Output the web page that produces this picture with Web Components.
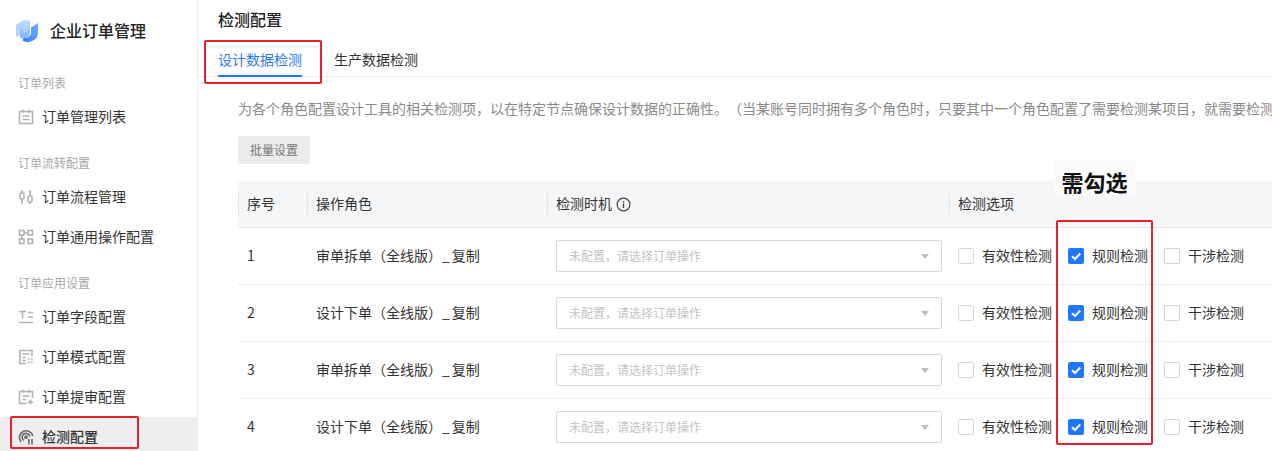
<!DOCTYPE html>
<html lang="zh-CN">
<head>
<meta charset="utf-8">
<title>检测配置</title>
<style>
html, body { margin: 0; height: 451px; overflow: hidden; background: #fff; }
body { font-family: "Noto Sans CJK SC", "Noto Sans", sans-serif; color: #333; font-size: 14px; text-spacing-trim: space-all; }
</style>
</head>
<body>
<order-app></order-app>
<script>
const ICONS = {
    list: '<rect x="1.500" y="2.500" width="13" height="12"/><path d="M5 .5v3.500M11 .5v3.500M4.500 7h7M4.500 10.500h7"/>',
    sliders: '<path d="M4 1v3M4 10v5M12 1v6M12 13v2"/><rect x="2" y="4" width="4" height="6" rx="1"/><rect x="10" y="7" width="4" height="6" rx="1"/>',
    nodes: '<rect x="1.500" y="1.500" width="4.500" height="4.500"/><rect x="10" y="1.500" width="4.500" height="4.500"/><rect x="1.500" y="10" width="4.500" height="4.500"/><rect x="10" y="10" width="4.500" height="4.500"/><path d="M6 3.700h4M3.700 6v4"/>',
    fields: '<path d="M1 2.500h7M4.500 2.500v7M10 3.500h5M10 8h5M1 13.500h14"/>',
    mode: '<path d="M14 7V1.500H2v13h6"/><path d="M4.500 5h7M4.500 8.500h3M4.500 11.500h3"/><path d="M10 9.800h1.600M13 9.800h1.600M10 13.300h1.600M13 13.300h1.600" stroke-width="1.800"/>',
    review: '<path d="M9 14.500H1.500v-12h13V9"/><path d="M5 .5v3.500M11 .5v3.500M4.500 7h7M4.500 10.500h3M12.500 10.500v5M10 13h5"/>',
    detect: '<path d="M3 13A6.800 6.800 0 1 1 14.800 7"/><path d="M5.800 11.500A3.900 3.900 0 1 1 11.800 7.500"/><circle cx="8" cy="8.200" r="1.100"/><path d="M10.800 10v5.500M14 10v5.500"/>'
};

class OrderLogo extends HTMLElement {
    constructor() {
        super();
        this.attachShadow({ mode: 'open' });
        this.shadowRoot.innerHTML = `
        <style>:host{display:block;width:22px;height:23px}svg{display:block}</style>
        <svg width="22" height="23" viewBox="0 0 22 23">
            <defs>
                <linearGradient id="a" x1="0" y1="0" x2="0" y2="1"><stop offset="0" stop-color="#c6ddfe"/><stop offset="1" stop-color="#7db2fc"/></linearGradient>
                <linearGradient id="b" x1="1" y1="0" x2="0" y2="1"><stop offset="0" stop-color="#7ab2fd"/><stop offset="1" stop-color="#2a80fa"/></linearGradient>
            </defs>
            <path d="M0 5 5 2V15L0 17Z" fill="#b4d2fd"/>
            <path d="M4 2C7 0 10 0 14 .5V13C14 16 11 18 7 18H4Z" fill="url(#a)"/>
            <path d="M7 21C10 22.500 13 22.500 16 21 19 20 22 17 22 13V3L15 7.500V13C15 16 12 18 7 18Z" fill="url(#b)"/>
            <path d="M7.500 6 11.500 4.500M7.500 9 11.500 7.500M7.500 12 11.500 10.500" stroke="#e4efff" stroke-width=".8" fill="none"/>
        </svg>`;
    }
}
customElements.define('order-logo', OrderLogo);

class NavGroup extends HTMLElement {
    constructor() {
        super();
        this.attachShadow({ mode: 'open' });
        this.shadowRoot.innerHTML = `
        <style>
        :host{display:block;margin-bottom:14px}
        .label{height:26px;line-height:24px;padding-left:18px;font-size:12px;color:#a8a8a8}
        </style>
        <div class="label"></div>
        <slot></slot>`;
        this.shadowRoot.querySelector('.label').textContent = this.getAttribute('label');
    }
}
customElements.define('nav-group', NavGroup);

class NavItem extends HTMLElement {
    constructor() {
        super();
        this.attachShadow({ mode: 'open' });
        this.shadowRoot.innerHTML = `
        <style>
        :host{display:flex;align-items:center;gap:8px;height:40px;padding-left:18px;font-size:14px;color:#333}
        :host([active]){background:#eee;font-weight:500}
        slot{display:block;margin-top:-2px}
        svg{display:block;width:16px;height:16px;fill:none;stroke:#b0b2b5;stroke-width:1.600}
        :host([active]) svg{stroke:#66686b}
        </style>
        <svg viewBox="0 0 16 16">${ICONS[this.getAttribute('icon')]}</svg>
        <slot></slot>`;
    }
}
customElements.define('nav-item', NavItem);

class OrderSidebar extends HTMLElement {
    constructor() {
        super();
        this.attachShadow({ mode: 'open' });
        this.shadowRoot.innerHTML = `
        <style>
        :host{display:block;flex:none;width:197px;height:451px;overflow:hidden;border-right:1px solid #eee}
        .brand{display:flex;align-items:center;gap:12px;height:62px;margin-bottom:9px;padding-left:16px;font-size:16px;font-weight:500;color:#222}
        .brand span{margin-top:-2px}
        </style>
        <div class="brand"><order-logo></order-logo><span>企业订单管理</span></div>
        <nav-group label="订单列表">
            <nav-item icon="list">订单管理列表</nav-item>
        </nav-group>
        <nav-group label="订单流转配置">
            <nav-item icon="sliders">订单流程管理</nav-item>
            <nav-item icon="nodes">订单通用操作配置</nav-item>
        </nav-group>
        <nav-group label="订单应用设置">
            <nav-item icon="fields">订单字段配置</nav-item>
            <nav-item icon="mode">订单模式配置</nav-item>
            <nav-item icon="review">订单提审配置</nav-item>
            <nav-item icon="detect" active>检测配置</nav-item>
        </nav-group>`;
    }
}
customElements.define('order-sidebar', OrderSidebar);

class TabBar extends HTMLElement {
    constructor() {
        super();
        this.attachShadow({ mode: 'open' });
        this.shadowRoot.innerHTML = `
        <style>
        :host{display:flex;gap:32px;height:36px;padding-left:20px;border-bottom:1px solid #ebebeb}
        span{padding-top:9px;line-height:20px;box-sizing:border-box;height:37px;font-size:14px;color:#333}
        .on{color:#2b7cf6;border-bottom:2px solid #1f78ff}
        </style>
        <span class="on">设计数据检测</span>
        <span>生产数据检测</span>`;
    }
}
customElements.define('tab-bar', TabBar);

class RoleSelect extends HTMLElement {
    constructor() {
        super();
        this.attachShadow({ mode: 'open' });
        this.shadowRoot.innerHTML = `
        <style>
        :host{display:flex;align-items:center;justify-content:space-between;box-sizing:border-box;width:386px;height:32px;padding:0 12px;border:1px solid #d9d9d9;border-radius:2px;font-size:12px;color:#c4c4c4}
        span{margin-top:-2px}
        i{width:0;height:0;border:4px solid transparent;border-top:5px solid #bdbdbd;border-bottom:0}
        </style>
        <span>未配置，请选择订单操作</span><i></i>`;
    }
}
customElements.define('role-select', RoleSelect);

class RuleCheck extends HTMLElement {
    constructor() {
        super();
        this.attachShadow({ mode: 'open' });
        this.shadowRoot.innerHTML = `
        <style>
        :host{display:flex;align-items:center;gap:8px;font-size:14px;color:#333}
        slot{display:block;margin-top:-2px}
        .box{box-sizing:border-box;width:16px;height:16px;border:1px solid #d6d6d6;border-radius:2px;background:#fff}
        :host([checked]) .box{border:0;background:#1f78ff}
        svg{display:block;width:16px;height:16px}
        </style>
        <div class="box">${this.hasAttribute('checked') ? '<svg viewBox="0 0 16 16"><path d="M4 8.200 7 11 12.200 5.500" fill="none" stroke="#fff" stroke-width="2"/></svg>' : ''}</div>
        <slot></slot>`;
    }
}
customElements.define('rule-check', RuleCheck);

const COLUMNS = 'grid-template-columns:69px 240px 402px 1fr;';

class RuleHead extends HTMLElement {
    constructor() {
        super();
        this.attachShadow({ mode: 'open' });
        this.shadowRoot.innerHTML = `
        <style>
        :host{display:grid;${COLUMNS}align-items:center;box-sizing:border-box;height:47px;background:#f5f6f8;border-bottom:1px solid #e8e8e8;font-size:14px;color:#333}
        div{display:flex;align-items:center;gap:4px;height:22px;padding-left:8px;border-left:1px solid #e4e5e7}
        div:first-child{border-left:0;padding-left:7px}
        span{margin-top:-2px}
        svg{display:block;width:15px;height:15px}
        </style>
        <div><span>序号</span></div>
        <div><span>操作角色</span></div>
        <div><span>检测时机</span><svg viewBox="0 0 15 15"><circle cx="7.500" cy="7.500" r="6.400" fill="none" stroke="#444" stroke-width="1.200"/><path d="M7.500 6.500v4.500M7.500 4v1.400" stroke="#444" stroke-width="1.400"/></svg></div>
        <div><span>检测选项</span></div>`;
    }
}
customElements.define('rule-head', RuleHead);

class RuleRow extends HTMLElement {
    constructor() {
        super();
        this.attachShadow({ mode: 'open' });
        const [name, suffix] = this.getAttribute('role').split('_');
        this.shadowRoot.innerHTML = `
        <style>
        :host{display:grid;${COLUMNS}align-items:center;box-sizing:border-box;height:57px;border-bottom:1px solid #ececec;font-size:14px;color:#333}
        .cell{padding-left:9px;white-space:nowrap}
        .cell:first-child{padding-left:7px}
        .num,.role{margin-top:-2px}
        .role b{font-weight:400;letter-spacing:2px}
        .opts{display:flex;gap:16px}
        </style>
        <div class="cell num">${this.getAttribute('num')}</div>
        <div class="cell role">${name}<b>_</b>${suffix}</div>
        <div class="cell"><role-select></role-select></div>
        <div class="cell opts">
            <rule-check>有效性检测</rule-check>
            <rule-check checked>规则检测</rule-check>
            <rule-check>干涉检测</rule-check>
        </div>`;
    }
}
customElements.define('rule-row', RuleRow);

class CheckPage extends HTMLElement {
    constructor() {
        super();
        this.attachShadow({ mode: 'open' });
        this.shadowRoot.innerHTML = `
        <style>
        :host{display:block;flex:1;min-width:0;height:451px;overflow:hidden}
        h1{margin:0;height:40px;line-height:38px;padding-left:20px;font-size:16px;font-weight:500;color:#222}
        .body{padding:22px 0 0 40px}
        p{margin:0 0 17px;height:20px;line-height:18px;white-space:nowrap;font-size:14px;color:#8a8a8a}
        button{display:block;width:72px;height:28px;margin:0 0 17px;padding:0 0 2px;border:0;border-radius:2px;background:#ebebeb;font:12px "Noto Sans CJK SC",sans-serif;color:#777}
        </style>
        <h1>检测配置</h1>
        <tab-bar></tab-bar>
        <div class="body">
            <p>为各个角色配置设计工具的相关检测项，以在特定节点确保设计数据的正确性。（当某账号同时拥有多个角色时，只要其中一个角色配置了需要检测某项目，就需要检测</p>
            <button>批量设置</button>
            <rule-head></rule-head>
            <rule-row num="1" role="审单拆单（全线版）_复制"></rule-row>
            <rule-row num="2" role="设计下单（全线版）_复制"></rule-row>
            <rule-row num="3" role="审单拆单（全线版）_复制"></rule-row>
            <rule-row num="4" role="设计下单（全线版）_复制"></rule-row>
        </div>`;
    }
}
customElements.define('check-page', CheckPage);

// red boxes and the note were drawn on the screenshot, so they sit over the page
class MarkBox extends HTMLElement {
    constructor() {
        super();
        this.attachShadow({ mode: 'open' });
        const [x, y, w, h] = this.getAttribute('rect').split(',');
        this.shadowRoot.innerHTML = `
        <style>
        :host{position:absolute;left:${x}px;top:${y}px;width:${w}px;height:${h}px;box-sizing:border-box;border:2px solid #e8202e;border-radius:2px}
        </style>`;
    }
}
customElements.define('mark-box', MarkBox);

class MarkNote extends HTMLElement {
    constructor() {
        super();
        this.attachShadow({ mode: 'open' });
        this.shadowRoot.innerHTML = `
        <style>
        :host{position:absolute;left:1054px;top:161px;width:81px;height:34px;background:#fafafa;text-align:center;line-height:41px;font-size:22px;font-weight:700;color:#111}
        </style>
        <slot></slot>`;
    }
}
customElements.define('mark-note', MarkNote);

class OrderApp extends HTMLElement {
    constructor() {
        super();
        this.attachShadow({ mode: 'open' });
        this.shadowRoot.innerHTML = `
        <style>
        :host{display:flex;position:relative;width:1272px;height:451px;overflow:hidden}
        </style>
        <order-sidebar></order-sidebar>
        <check-page></check-page>
        <mark-box rect="204,40,118,44"></mark-box>
        <mark-box rect="10,416,129,33"></mark-box>
        <mark-box rect="1056,220,97,225"></mark-box>
        <mark-note>需勾选</mark-note>`;
    }
}
customElements.define('order-app', OrderApp);
</script>
</body>
</html>
